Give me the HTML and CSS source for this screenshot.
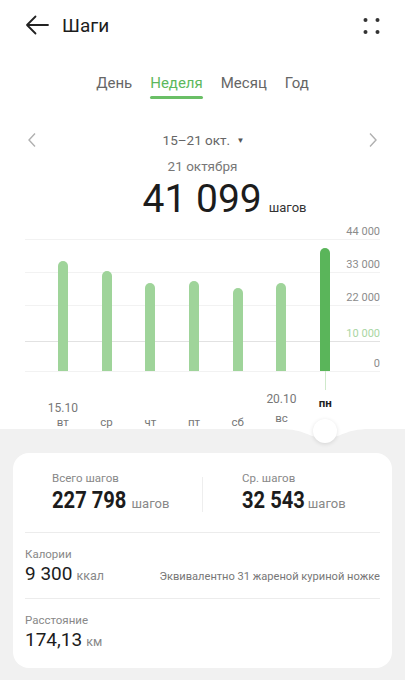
FILE: index.html
```html
<!DOCTYPE html>
<html lang="ru">
<head>
  <meta charset="UTF-8">
  <title>Шаги</title>
  <meta name="viewport" content="width=device-width, initial-scale=1.0">
  <link rel="stylesheet" href="styles.css">
</head>
<body>

  <div class="pantalla">
    <header class="cabecera">
      <svg class="icono-atras" width="24" height="20" viewBox="0 0 24 20">
        <path d="M23 10H2M10.5 1.5L2 10l8.5 8.5" fill="none" stroke="#222" stroke-width="1.8" stroke-linecap="round" stroke-linejoin="round"/>
      </svg>
      <h1 class="titulo">Шаги</h1>
      <svg class="icono-mas" width="18" height="18" viewBox="0 0 18 18">
        <circle cx="2.5" cy="3" r="2" fill="#333"/>
        <circle cx="14.5" cy="3" r="2" fill="#333"/>
        <circle cx="2.5" cy="15" r="2" fill="#333"/>
        <circle cx="14.5" cy="15" r="2" fill="#333"/>
      </svg>
    </header>

    <nav class="pestanas">
      <span class="pestana">День</span>
      <span class="pestana activa">Неделя</span>
      <span class="pestana">Месяц</span>
      <span class="pestana">Год</span>
    </nav>

    <div class="periodo">
      <svg width="10" height="16" viewBox="0 0 10 16"><path d="M8 1.5L2 8l6 6.5" fill="none" stroke="#b0b0b0" stroke-width="1.4"/></svg>
      <span class="rango">15–21 окт. <span class="triangulo">▼</span></span>
      <svg width="10" height="16" viewBox="0 0 10 16"><path d="M2 1.5L8 8l-6 6.5" fill="none" stroke="#b0b0b0" stroke-width="1.4"/></svg>
    </div>

    <div class="fecha">21 октября</div>
    <div class="total-dia"><span class="cifra">41 099</span><span class="unidad">шагов</span></div>

    <div class="grafico">
      <div class="area">
        <div class="linea" style="top:0"></div>
        <div class="linea" style="top:33px"></div>
        <div class="linea" style="top:66px"></div>
        <div class="linea meta" style="top:102px"></div>
        <div class="linea" style="top:132px"></div>

        <span class="eje" style="top:-14px">44 000</span>
        <span class="eje" style="top:19px">33 000</span>
        <span class="eje" style="top:52px">22 000</span>
        <span class="eje verde" style="top:88px">10 000</span>
        <span class="eje" style="top:118px">0</span>

        <div class="barras">
          <div class="columna"><div class="barra" style="height:110px"></div></div>
          <div class="columna"><div class="barra" style="height:100px"></div></div>
          <div class="columna"><div class="barra" style="height:88px"></div></div>
          <div class="columna"><div class="barra" style="height:90px"></div></div>
          <div class="columna"><div class="barra" style="height:83px"></div></div>
          <div class="columna"><div class="barra" style="height:88px"></div></div>
          <div class="columna"><div class="barra activa" style="height:123px"></div></div>
        </div>
      </div>

      <div class="dias">
        <div class="dia"><span class="dato">15.10</span><span class="nombre">вт</span></div>
        <div class="dia"><span class="nombre">ср</span></div>
        <div class="dia"><span class="nombre">чт</span></div>
        <div class="dia"><span class="nombre">пт</span></div>
        <div class="dia"><span class="nombre">сб</span></div>
        <div class="dia domingo"><span class="dato">20.10</span><span class="nombre">вс</span></div>
        <div class="dia hoy"><span class="nombre">пн</span></div>
      </div>
    </div>

    <section class="resumen">
      <svg class="joroba" width="90" height="10" viewBox="0 0 90 10">
        <path d="M0 0C26 0 28 9 45 9C62 9 64 0 90 0Z" fill="#fff"/>
      </svg>
      <div class="tirador"></div>

      <div class="tarjeta">
        <div class="fila-doble">
          <div class="bloque">
            <div class="etiqueta">Всего шагов</div>
            <div class="valor"><span class="negrita">227 798</span><span class="unidad-gris">шагов</span></div>
          </div>
          <div class="separador-v"></div>
          <div class="bloque derecho">
            <div class="etiqueta">Ср. шагов</div>
            <div class="valor"><span class="negrita">32 543</span><span class="unidad-gris">шагов</span></div>
          </div>
        </div>

        <div class="separador"></div>

        <div class="seccion">
          <div class="etiqueta">Калории</div>
          <div class="valor-fila">
            <div class="valor"><span class="normal">9 300</span><span class="unidad-gris">ккал</span></div>
            <span class="equivalente">Эквивалентно 31 жареной куриной ножке</span>
          </div>
        </div>

        <div class="separador"></div>

        <div class="seccion ultima">
          <div class="etiqueta">Расстояние</div>
          <div class="valor"><span class="normal">174,13</span><span class="unidad-gris">км</span></div>
        </div>
      </div>
    </section>
  </div>

</body>
</html>
```

FILE: styles.css
```css
:root {
  --verde: #5cb85c;
  --verde-claro: #9fd49a;
  --texto: #1c1c1c;
  --gris: #888;
  --fondo: #f1f1f1;
}

body {
  margin: 0;
  font-family: Roboto, 'Noto Sans', sans-serif;
  color: var(--texto);
  background: var(--fondo);
}

.pantalla {
  width: 405px;
  height: 680px;
  overflow: hidden;
  background: white;
}

.cabecera {
  height: 50px;
  display: flex;
  align-items: center;
  padding: 0 24px 0 25px;
}

.titulo {
  margin: 0 0 0 13px;
  font-size: 19px;
  font-weight: 400;
  flex: 1;
}

.icono-mas {
  margin-top: 1px;
}

.pestanas {
  margin-top: 23px;
  display: flex;
  justify-content: center;
  gap: 18px;
}

.pestana {
  position: relative;
  font-size: 15px;
  line-height: 20px;
  padding-bottom: 6px;
  color: #666;
}

.pestana.activa {
  color: var(--verde);
}

.pestana.activa::after {
  content: "";
  position: absolute;
  left: 0;
  right: 0;
  bottom: 0;
  height: 3px;
  border-radius: 2px;
  background: #6abf66;
}

.periodo {
  margin-top: 31px;
  height: 20px;
  display: flex;
  align-items: center;
  justify-content: space-between;
  padding: 0 27px 0 27px;
}

.rango {
  font-size: 13.5px;
  color: #666;
  margin-left: 2px;
}

.triangulo {
  font-size: 8px;
  vertical-align: 2px;
  margin-left: 3px;
  color: #555;
}

.fecha {
  margin-top: 6px;
  text-align: center;
  font-size: 13.5px;
  line-height: 20px;
  color: #777;
}

.total-dia {
  margin-top: 1px;
  text-align: center;
  padding-left: 44px;
  line-height: 44px;
}

.cifra {
  font-size: 39px;
}

.unidad {
  font-size: 13px;
  margin-left: 7px;
  color: #333;
}

.grafico {
  margin: 9px 25px 0;
}

.area {
  position: relative;
  height: 133px;
}

.linea {
  position: absolute;
  left: 0;
  right: 0;
  height: 1px;
  background: #f2f2f2;
}

.linea.meta {
  background: #e2e2e2;
}

.eje {
  position: absolute;
  right: 0;
  font-size: 11px;
  line-height: 13px;
  color: #8c8c8c;
}

.eje.verde {
  color: #a9d6a3;
}

.barras {
  position: relative;
  display: flex;
  height: 132px;
  width: 306px;
  margin-left: 16px;
}

.columna {
  flex: 1;
  display: flex;
  justify-content: center;
  align-items: flex-end;
}

.barra {
  position: relative;
  width: 10px;
  border-radius: 5px 5px 0 0;
  background: var(--verde-claro);
}

.barra.activa {
  background: #5ab55a;
}

.barra.activa::after {
  content: "";
  position: absolute;
  top: 100%;
  left: 5px;
  width: 1px;
  height: 19px;
  background: #cfe9cb;
}

.dias {
  display: flex;
  width: 306px;
  height: 57px;
  margin-left: 16px;
}

.dia {
  flex: 1;
  display: flex;
  flex-direction: column;
  justify-content: flex-end;
  align-items: center;
  font-size: 11.5px;
  line-height: 14px;
  color: #777;
}

.dia .dato {
  font-size: 12px;
}

.domingo .dato {
  margin-bottom: 5px;
}

.domingo .nombre {
  margin-bottom: 4px;
}

.hoy .nombre {
  margin-bottom: 19px;
  font-weight: 700;
  color: #222;
}

.resumen {
  position: relative;
  background: var(--fondo);
  padding: 24px 13px 12px;
}

.joroba {
  position: absolute;
  top: 0;
  left: 280px;
}

.tirador {
  position: absolute;
  top: -10px;
  left: 313px;
  width: 24px;
  height: 24px;
  border-radius: 50%;
  background: white;
  box-shadow: 0 1px 4px rgba(0,0,0,0.12);
}

.tarjeta {
  background: white;
  border-radius: 16px;
  padding-top: 17px;
  height: 198px;
}

.fila-doble {
  display: flex;
}

.bloque {
  width: 151px;
  padding-left: 39px;
}

.bloque.derecho {
  padding-left: 39px;
}

.separador-v {
  width: 1px;
  height: 35px;
  margin-top: 7px;
  background: #eeeeee;
}

.etiqueta {
  font-size: 11.5px;
  line-height: 16px;
  color: var(--gris);
}

.valor {
  line-height: 28px;
  white-space: nowrap;
}

.negrita {
  display: inline-block;
  font-size: 24px;
  font-weight: 700;
  transform: scaleX(0.84);
  transform-origin: left;
  margin-right: -14px;
}

.unidad-gris {
  font-size: 13px;
  color: var(--gris);
  margin-left: 5px;
}

.separador {
  height: 1px;
  margin: 14px 12px 0;
  background: #ececec;
}

.seccion {
  padding: 13px 12px 10px;
}

.seccion .valor {
  line-height: 24px;
}

.seccion + .separador {
  margin-top: 0;
}

.normal {
  font-size: 19px;
}

.seccion .unidad-gris {
  font-size: 12.5px;
  margin-left: 4px;
}

.valor-fila {
  display: flex;
  justify-content: space-between;
  align-items: baseline;
}

.equivalente {
  font-size: 11.1px;
  color: #777;
}
```
